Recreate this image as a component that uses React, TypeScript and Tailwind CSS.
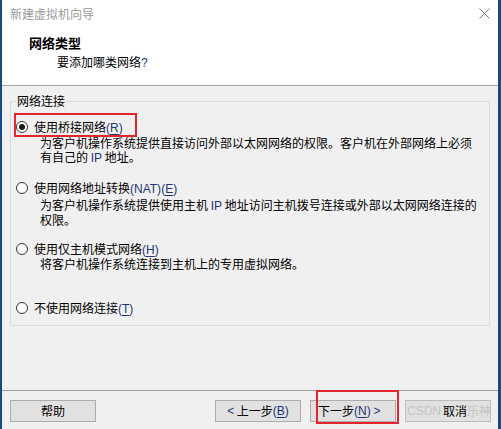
import React from "react"

const FONT = "font-['SimSun','Noto_Sans_CJK_SC','Liberation_Sans',sans-serif]"

function Lat({ children }: { children: React.ReactNode }) {
  return <span className="text-[#1f3478] font-['Liberation_Sans','Noto_Sans_CJK_SC',sans-serif]">{children}</span>
}

function Key({ k }: { k: string }) {
  return (
    <Lat>
      (<span className="underline underline-offset-2">{k}</span>)
    </Lat>
  )
}

function Radio({ checked }: { checked?: boolean }) {
  return (
    <span className="w-[12px] h-[12px] rounded-full border border-[#333] bg-white flex items-center justify-center shrink-0">
      {checked && <span className="w-[6px] h-[6px] rounded-full bg-[#1a1a1a]" />}
    </span>
  )
}

function Option({
  checked,
  label,
  children,
  highlight,
  className,
}: {
  checked?: boolean
  label: React.ReactNode
  children?: React.ReactNode
  highlight?: boolean
  className?: string
}) {
  return (
    <div className={className}>
      <div className="relative h-[16px] flex items-center gap-[6px] pl-[5px]">
        <Radio checked={checked} />
        <span className="leading-[16px]">{label}</span>
        {highlight && (
          <span className="absolute left-[3px] top-[-6px] w-[123px] h-[24px] border-2 border-[#e3262b]" />
        )}
      </div>
      {children && <div className="pl-[29px] leading-[14px]">{children}</div>}
    </div>
  )
}

function Button({ children, className }: { children: React.ReactNode; className?: string }) {
  return (
    <div
      className={`relative w-[86px] h-[22px] shrink-0 whitespace-nowrap bg-[#e1e1e1] border border-[#adadad] flex items-center justify-center ${className ?? ""}`}
    >
      {children}
    </div>
  )
}

export default function App() {
  return (
    <div
      className={`w-[501px] h-[429px] bg-[#f0f0f0] border-l-2 border-r-[3px] border-[#174887] flex flex-col text-[12px] text-black overflow-hidden ${FONT}`}
    >
      {/* header */}
      <div className="h-[86px] bg-white border-b border-[#a0a0a0] shrink-0">
        <div className="h-[28px] flex items-center justify-between pl-[8px] pr-[8px]">
          <span className="text-[#9a9a9a] leading-[16px]">新建虚拟机向导</span>
          <svg width="11" height="11" viewBox="0 0 11 11" className="mt-[-1px]">
            <path d="M0.5 0.5 L10.5 10.5 M10.5 0.5 L0.5 10.5" stroke="#7a7a7a" strokeWidth="1" />
          </svg>
        </div>
        <div className="pl-[27px] mt-[7px] text-[13px] font-bold leading-[16px]">网络类型</div>
        <div className="pl-[55px] mt-[3px] leading-[16px]">
          要添加哪类网络<Lat>?</Lat>
        </div>
      </div>

      {/* body */}
      <div className="flex-1 px-[8px] pt-[15px]">
        <div className="relative h-[225px] border border-[#dcdcdc]">
          <span className="absolute left-[5px] top-[-9px] px-[1px] bg-[#f0f0f0] leading-[16px]">网络连接</span>

          <Option
            className="pt-[17px]"
            checked
            highlight
            label={
              <>
                使用桥接网络<Key k="R" />
              </>
            }
          >
            <div className="mt-[1px]">
              为客户机操作系统提供直接访问外部以太网网络的权限。客户机在外部网络上必须
              <br />
              有自己的 <Lat>IP</Lat> 地址。
            </div>
          </Option>

          <Option
            className="mt-[15px]"
            label={
              <>
                使用网络地址转换<Lat>(NAT)</Lat>
                <Key k="E" />
              </>
            }
          >
            <div className="mt-[2px]">
              为客户机操作系统提供使用主机 <Lat>IP</Lat> 地址访问主机拨号连接或外部以太网网络连接的
              <br />
              权限。
            </div>
          </Option>

          <Option
            className="mt-[14px]"
            label={
              <>
                使用仅主机模式网络<Key k="H" />
              </>
            }
          >
            <div>将客户机操作系统连接到主机上的专用虚拟网络。</div>
          </Option>

          <Option
            className="mt-[29px]"
            label={
              <>
                不使用网络连接<Key k="T" />
              </>
            }
          />
        </div>
      </div>

      {/* footer */}
      <div className="h-[39px] shrink-0 border-t border-[#a0a0a0] flex items-start pt-[9px] pl-[8px] pr-[7px]">
        <Button>帮助</Button>
        <div className="flex-1" />
        <Button>
          <Lat>&lt;</Lat>&nbsp;上一步<Key k="B" />
        </Button>
        <Button className="ml-[9px] justify-start pl-[7px]">
          下一步<Key k="N" />&nbsp;<Lat>&gt;</Lat>
          <span className="absolute left-[5px] top-[-11px] w-[83px] h-[34px] border-2 border-[#e3262b]" />
        </Button>
        <Button className="ml-[9px] border-[#bcbcbc] justify-start pl-[1px] overflow-hidden">
          <span className="shrink-0 text-[12px] text-[#c4c4c4] font-['Liberation_Sans',sans-serif]">CSDN</span>
          <span className="shrink-0 ml-[2px]">取消</span>
          <span className="shrink-0 text-[12px] text-[#c4c4c4]">乐神</span>
        </Button>
      </div>
    </div>
  )
}
